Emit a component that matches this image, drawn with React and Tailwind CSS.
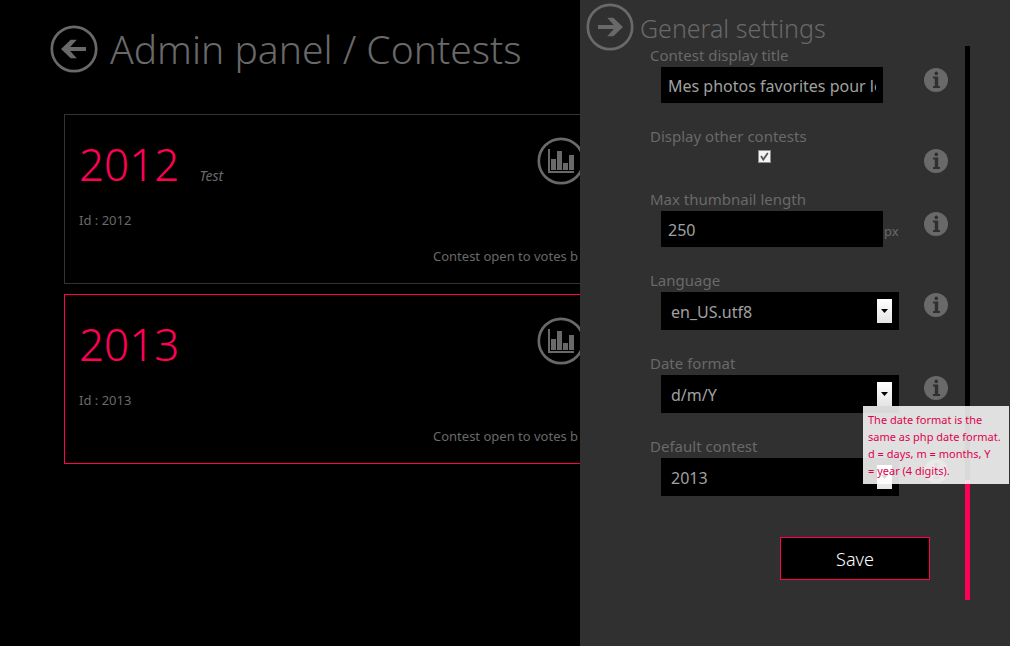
import React from "react";

function CircleArrow({ direction }) {
  return (
    <svg width="48" height="48" viewBox="0 0 48 48" className="shrink-0 text-[#696969]" aria-hidden="true">
      <circle cx="24" cy="24" r="22.2" fill="none" stroke="currentColor" strokeWidth="2.7" />
      <path
        transform={direction === "right" ? "translate(48 0) scale(-1 1)" : undefined}
        d="M11 24 L20.7 14.8 H26.8 L20.2 22 H36 V26 H20.2 L26.8 33.2 H20.7 Z"
        fill="currentColor"
      />
    </svg>
  );
}

function ChartIcon() {
  return (
    <svg width="48" height="48" viewBox="0 0 48 48" className="block shrink-0 text-[#696969]" aria-hidden="true">
      <circle cx="24" cy="24" r="22.2" fill="none" stroke="currentColor" strokeWidth="2.7" />
      <path
        d="M11 12h2v22h24v2H11z M14 22h5v11h-5z M20 14h5v19h-5z M26 26h5v7h-5z M32 18h5v15h-5z"
        fill="currentColor"
      />
    </svg>
  );
}

function InfoIcon() {
  return (
    <svg width="24" height="24" viewBox="0 0 24 24" className="block" aria-hidden="true">
      <circle cx="12" cy="12" r="12" fill="#696969" />
      <circle cx="12.3" cy="5.4" r="1.8" fill="#303030" />
      <path d="M9 8.6h5.2V18H16v2H9v-2h1.8v-7.4H9z" fill="#303030" />
    </svg>
  );
}

function ContestCard({ title, note, id, active }) {
  return (
    <article
      className={
        "flex h-[170px] flex-col justify-between border border-r-0 pt-[22px] pb-[17px] pl-[14px] " +
        (active ? "border-[#ff0055]" : "border-[#333333]")
      }
    >
      <div className="flex items-start justify-between">
        <div>
          <div className="flex items-baseline gap-5">
            <h2 className="text-[44px] leading-[54px] font-light text-[#ff0055]">{title}</h2>
            {note && <em className="text-[14px]">{note}</em>}
          </div>
          <p className="mt-[19px] text-[13px] leading-5">Id : {id}</p>
        </div>
        <button type="button" aria-label={"Statistics " + title} className="w-[43px] overflow-hidden">
          <ChartIcon />
        </button>
      </div>
      <p className="w-[147px] self-end overflow-hidden text-[13px] leading-5 whitespace-nowrap">
        Contest open to votes b
      </p>
    </article>
  );
}

function Field({ label, htmlFor, children, tip }) {
  return (
    <div className="flex items-start justify-between pr-[17px] pl-[70px]">
      <div>
        <label htmlFor={htmlFor} className="block h-6 text-[15px] leading-6">
          {label}
        </label>
        <div className="pl-[11px]">{children}</div>
      </div>
      <div className="relative mt-[25px] h-[17px]">
        <button type="button" aria-label={"About " + label} className="block">
          <InfoIcon />
        </button>
        {tip && (
          <div
            role="tooltip"
            className="absolute top-[30px] right-[-61px] z-10 w-[146px] bg-white/85 px-[5px] py-[5px] text-[11px] leading-[17px] whitespace-nowrap text-[#e0004d]"
          >
            {tip.map((line) => (
              <div key={line}>{line}</div>
            ))}
          </div>
        )}
      </div>
    </div>
  );
}

function SelectBox({ id, value }) {
  return (
    <div className="relative w-[238px]">
      <select
        id={id}
        defaultValue={value}
        className="block h-[38px] w-full appearance-none bg-black px-[10px] pt-px text-[16px] text-[#a0a0a0]"
      >
        <option>{value}</option>
      </select>
      <span className="pointer-events-none absolute top-[7px] right-[7px] flex h-6 w-[15px] items-center justify-center bg-linear-to-b from-white to-[#e4e4e4]">
        <svg width="7" height="4" viewBox="0 0 7 4" aria-hidden="true">
          <path d="M0 0h7L3.5 4z" fill="#000" />
        </svg>
      </span>
    </div>
  );
}

export default function App() {
  return (
    <div className="flex min-h-screen bg-black font-['Noto_Sans','Open_Sans',sans-serif] text-[#696969]">
      <main className="min-w-0 flex-1 overflow-hidden">
        <header className="flex items-center gap-3 pt-[25px] pl-[50px] whitespace-nowrap">
          <button type="button" aria-label="Back">
            <CircleArrow direction="left" />
          </button>
          <h1 className="text-[39px] leading-[48px] font-light">Admin panel / Contests</h1>
        </header>
        <div className="mt-[41px] flex flex-col gap-[10px] pl-16">
          <ContestCard title="2012" note="Test" id="2012" />
          <ContestCard title="2013" id="2013" active />
        </div>
      </main>

      <aside className="flex w-[430px] shrink-0 bg-[#303030]">
        <form className="flex-1" onSubmit={(e) => e.preventDefault()}>
          <div className="flex h-[43px] items-start gap-[6px] pt-[3px] pl-[6px]">
            <button type="button" aria-label="Close settings">
              <CircleArrow direction="right" />
            </button>
            <h2 className="text-[25px] leading-[50px] font-light whitespace-nowrap">General settings</h2>
          </div>
          <div className="flex flex-col gap-[21px]">
            <Field label="Contest display title" htmlFor="title">
              <input
                id="title"
                type="text"
                defaultValue="Mes photos favorites pour les"
                className="block h-9 w-[222px] bg-black px-[7px] pt-px text-[16px] text-[#a0a0a0]"
              />
            </Field>
            <Field label="Display other contests" htmlFor="others">
              <div className="relative mt-[2px] ml-[97px] h-4 w-[13px]">
                <input
                  id="others"
                  type="checkbox"
                  defaultChecked
                  className="peer block size-[13px] appearance-none border border-[#8e8f8f] bg-[#f4f4f4]"
                />
                <svg
                  width="13"
                  height="13"
                  viewBox="0 0 13 13"
                  className="pointer-events-none absolute top-0 left-0 hidden peer-checked:block"
                  aria-hidden="true"
                >
                  <path d="M3 6l2.3 3.6L9.8 3" fill="none" stroke="#555" strokeWidth="1.8" />
                </svg>
              </div>
            </Field>
            <Field label="Max thumbnail length" htmlFor="thumb">
              <div className="flex items-end gap-px">
                <input
                  id="thumb"
                  type="text"
                  defaultValue="250"
                  className="block h-9 w-[222px] bg-black px-[7px] pt-px text-[16px] text-[#a0a0a0]"
                />
                <span className="pb-1 text-[13px] leading-6">px</span>
              </div>
            </Field>
            <Field label="Language" htmlFor="language">
              <SelectBox id="language" value="en_US.utf8" />
            </Field>
            <Field
              label="Date format"
              htmlFor="date"
              tip={["The date format is the", "same as php date format.", "d = days, m = months, Y", "= year (4 digits)."]}
            >
              <SelectBox id="date" value="d/m/Y" />
            </Field>
            <Field label="Default contest" htmlFor="default">
              <SelectBox id="default" value="2013" />
            </Field>
          </div>
          <div className="mt-[41px] flex justify-end pr-[35px]">
            <button
              type="submit"
              className="h-[43px] w-[150px] border border-[#ff0055] bg-black pt-[2px] text-[18px] font-light text-white"
            >
              Save
            </button>
          </div>
        </form>
        <div className="my-[46px] mr-10 flex w-[5px] flex-col justify-end bg-black">
          <div className="h-[120px] bg-[#ff0055]" />
        </div>
      </aside>
    </div>
  );
}
